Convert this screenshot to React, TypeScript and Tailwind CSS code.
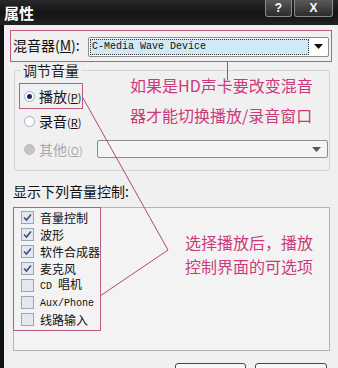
const ui = { fontFamily: '"Noto Sans CJK SC", "Liberation Sans", sans-serif' }
const mono = { fontFamily: '"Liberation Mono", "Noto Sans CJK SC", monospace' }

function Radio({ state }: { state: 'on' | 'off' | 'disabled' }) {
  if (state === 'disabled') {
    return <span className="w-[11px] h-[11px] rounded-full bg-[#c4c4c4] border border-[#bdbdbd] shrink-0" />
  }
  return (
    <span className="w-[11px] h-[11px] rounded-full bg-white border border-[#9db0c8] shrink-0 flex items-center justify-center">
      {state === 'on' && <span className="w-[5px] h-[5px] rounded-full bg-[#1e2a5a]" />}
    </span>
  )
}

function Check({ on }: { on: boolean }) {
  return (
    <span className="w-[13px] h-[13px] border border-[#9aa4ba] bg-[#e3e7ef] shrink-0 flex items-center justify-center">
      {on && (
        <svg width="9" height="9" viewBox="0 0 9 9">
          <path d="M1 4.5 L3.5 7 L8 1.5" fill="none" stroke="#3e4d7c" strokeWidth="1.6" />
        </svg>
      )}
    </span>
  )
}

function Arrow({ color = '#111' }: { color?: string }) {
  return (
    <svg width="9" height="5" viewBox="0 0 9 5">
      <path d="M0 0 H9 L4.5 5 Z" fill={color} />
    </svg>
  )
}

const items: { label: string; on: boolean; latin?: string }[] = [
  { label: '音量控制', on: true },
  { label: '波形', on: true },
  { label: '软件合成器', on: true },
  { label: '麦克风', on: true },
  { label: '唱机', on: false, latin: 'CD ' },
  { label: '', on: false, latin: 'Aux/Phone' },
  { label: '线路输入', on: false },
]

export default function App() {
  return (
    <div className="relative w-[338px] h-[368px] overflow-hidden bg-[#f0f0f0] text-[#111]" style={ui}>
      {/* title bar */}
      <div className="h-[25px] flex items-start justify-between bg-gradient-to-b from-[#2a2a2a] via-[#141414] to-[#222] pl-[4px] pr-[5px]">
        <span className="mt-[4px] text-[15px] leading-[17px] font-bold text-white">属性</span>
        <div className="flex gap-[2px]">
          <div className="w-[27px] h-[17px] rounded-b-[3px] border border-t-0 border-[#8a8a8a] bg-gradient-to-b from-[#5a5a5a] to-[#2c2c2c] flex items-center justify-center text-white text-[12px] font-bold leading-[12px]" style={{ fontFamily: '"Liberation Sans", sans-serif' }}>?</div>
          <div className="w-[39px] h-[17px] rounded-b-[3px] border border-t-0 border-[#8a8a8a] bg-gradient-to-b from-[#5a5a5a] to-[#2c2c2c] flex items-center justify-center text-white text-[12px] font-bold leading-[12px]" style={{ fontFamily: '"Liberation Sans", sans-serif' }}>X</div>
        </div>
      </div>

      {/* body */}
      <div className="border-l-[4px] border-[#111] flex flex-col">
        {/* mixer row */}
        <div className="shrink-0 mt-[5px] ml-[6px] w-[322px] h-[32px] border border-[#c05a82] flex items-center pl-[2px]">
          <span className="text-[14px] leading-[16px] w-[73px] -mt-[3px] whitespace-nowrap">混音器(<span className="underline">M</span>):</span>
          <div className="ml-[2px] mt-[1px] w-[241px] h-[20px] border border-[#8c8c8c] rounded-[2px] bg-white flex items-center p-[1px]">
            <div className="flex-1 h-full bg-[#cfe9f7] border border-dotted border-[#333] flex items-center pl-[1px]">
              <span className="text-[10px] leading-none" style={mono}>C-Media Wave Device</span>
            </div>
            <div className="w-[18px] flex items-center justify-center"><Arrow /></div>
          </div>
        </div>

        {/* volume group */}
        <fieldset className="shrink-0 mt-[1px] ml-[10px] w-[316px] border border-[#d4d4d4] rounded-[3px] pb-[12px]">
          <legend className="ml-[6px] px-[2px] text-[14px] leading-[15px] text-[#222]">调节音量</legend>
          <div className="mt-[5px] ml-[4px] w-[64px] h-[26px] border border-[#c05a82] flex items-center gap-[4px] pl-[4px]">
            <Radio state="on" />
            <span className="text-[14px] leading-[16px] whitespace-nowrap">播放<span className="text-[11px]">(<span className="underline">P</span>)</span></span>
          </div>
          <div className="mt-[3px] ml-[9px] h-[18px] flex items-center gap-[4px]">
            <Radio state="off" />
            <span className="text-[14px] leading-[16px] whitespace-nowrap">录音<span className="text-[11px]">(<span className="underline">R</span>)</span></span>
          </div>
          <div className="mt-[10px] ml-[9px] h-[18px] flex items-center">
            <Radio state="disabled" />
            <span className="ml-[4px] w-[58px] text-[14px] leading-[16px] text-[#a8a8a8] whitespace-nowrap">其他<span className="text-[11px]">(<span className="underline">O</span>)</span></span>
            <div className="w-[231px] h-[18px] border border-[#8c8c8c] rounded-[2px] bg-[#f4f4f4] flex items-center justify-end pr-[6px]">
              <Arrow color="#4a5a6a" />
            </div>
          </div>
        </fieldset>

        <span className="shrink-0 mt-[12px] ml-[9px] text-[14px] leading-[16px]">显示下列音量控制:</span>

        {/* listbox */}
        <div className="shrink-0 mt-[8px] ml-[9px] w-[317px] h-[144px] border border-[#b4b4b4] bg-[#f3f3f3]">
          <div className="-ml-px -mt-px w-[88px] h-[124px] border border-[#c05a82] pt-[1px]">
            {items.map((it) => (
              <div key={it.latin ?? it.label} className="h-[17px] flex items-center pl-[7px] gap-[6px]">
                <Check on={it.on} />
                <span className="text-[12px] leading-[14px] whitespace-nowrap">
                  {it.latin && <span className="text-[10px]" style={mono}>{it.latin}</span>}
                  {it.label}
                </span>
              </div>
            ))}
          </div>
        </div>

        {/* buttons */}
        <div className="shrink-0 mt-[12px] ml-[171px] flex gap-[9px]">
          <div className="w-[71px] h-[23px] border border-[#3c4c60] rounded-[3px] bg-[#f6f6f6]" />
          <div className="w-[72px] h-[23px] border border-[#3c4c60] rounded-[3px] bg-[#f6f6f6]" />
        </div>
      </div>

      {/* annotations */}
      <svg className="absolute inset-0 pointer-events-none" width="338" height="368">
        <g stroke="#b04a74" strokeWidth="1" fill="none">
          <path d="M227.5 62 V80" />
          <path d="M83 98 L168 250 L100 296" />
        </g>
      </svg>
      <div className="absolute left-[130px] top-[75px] text-[16px] leading-[20px] text-[#cc3a7c] pointer-events-none">
        如果是HD声卡要改变混音
      </div>
      <div className="absolute left-[130px] top-[105px] text-[16px] leading-[20px] text-[#cc3a7c] pointer-events-none">
        器才能切换播放/录音窗口
      </div>
      <div className="absolute left-[185px] top-[232px] text-[16px] leading-[20px] text-[#cc3a7c] pointer-events-none">
        选择播放后，播放
      </div>
      <div className="absolute left-[185px] top-[256px] text-[16px] leading-[20px] text-[#cc3a7c] pointer-events-none">
        控制界面的可选项
      </div>
    </div>
  )
}
